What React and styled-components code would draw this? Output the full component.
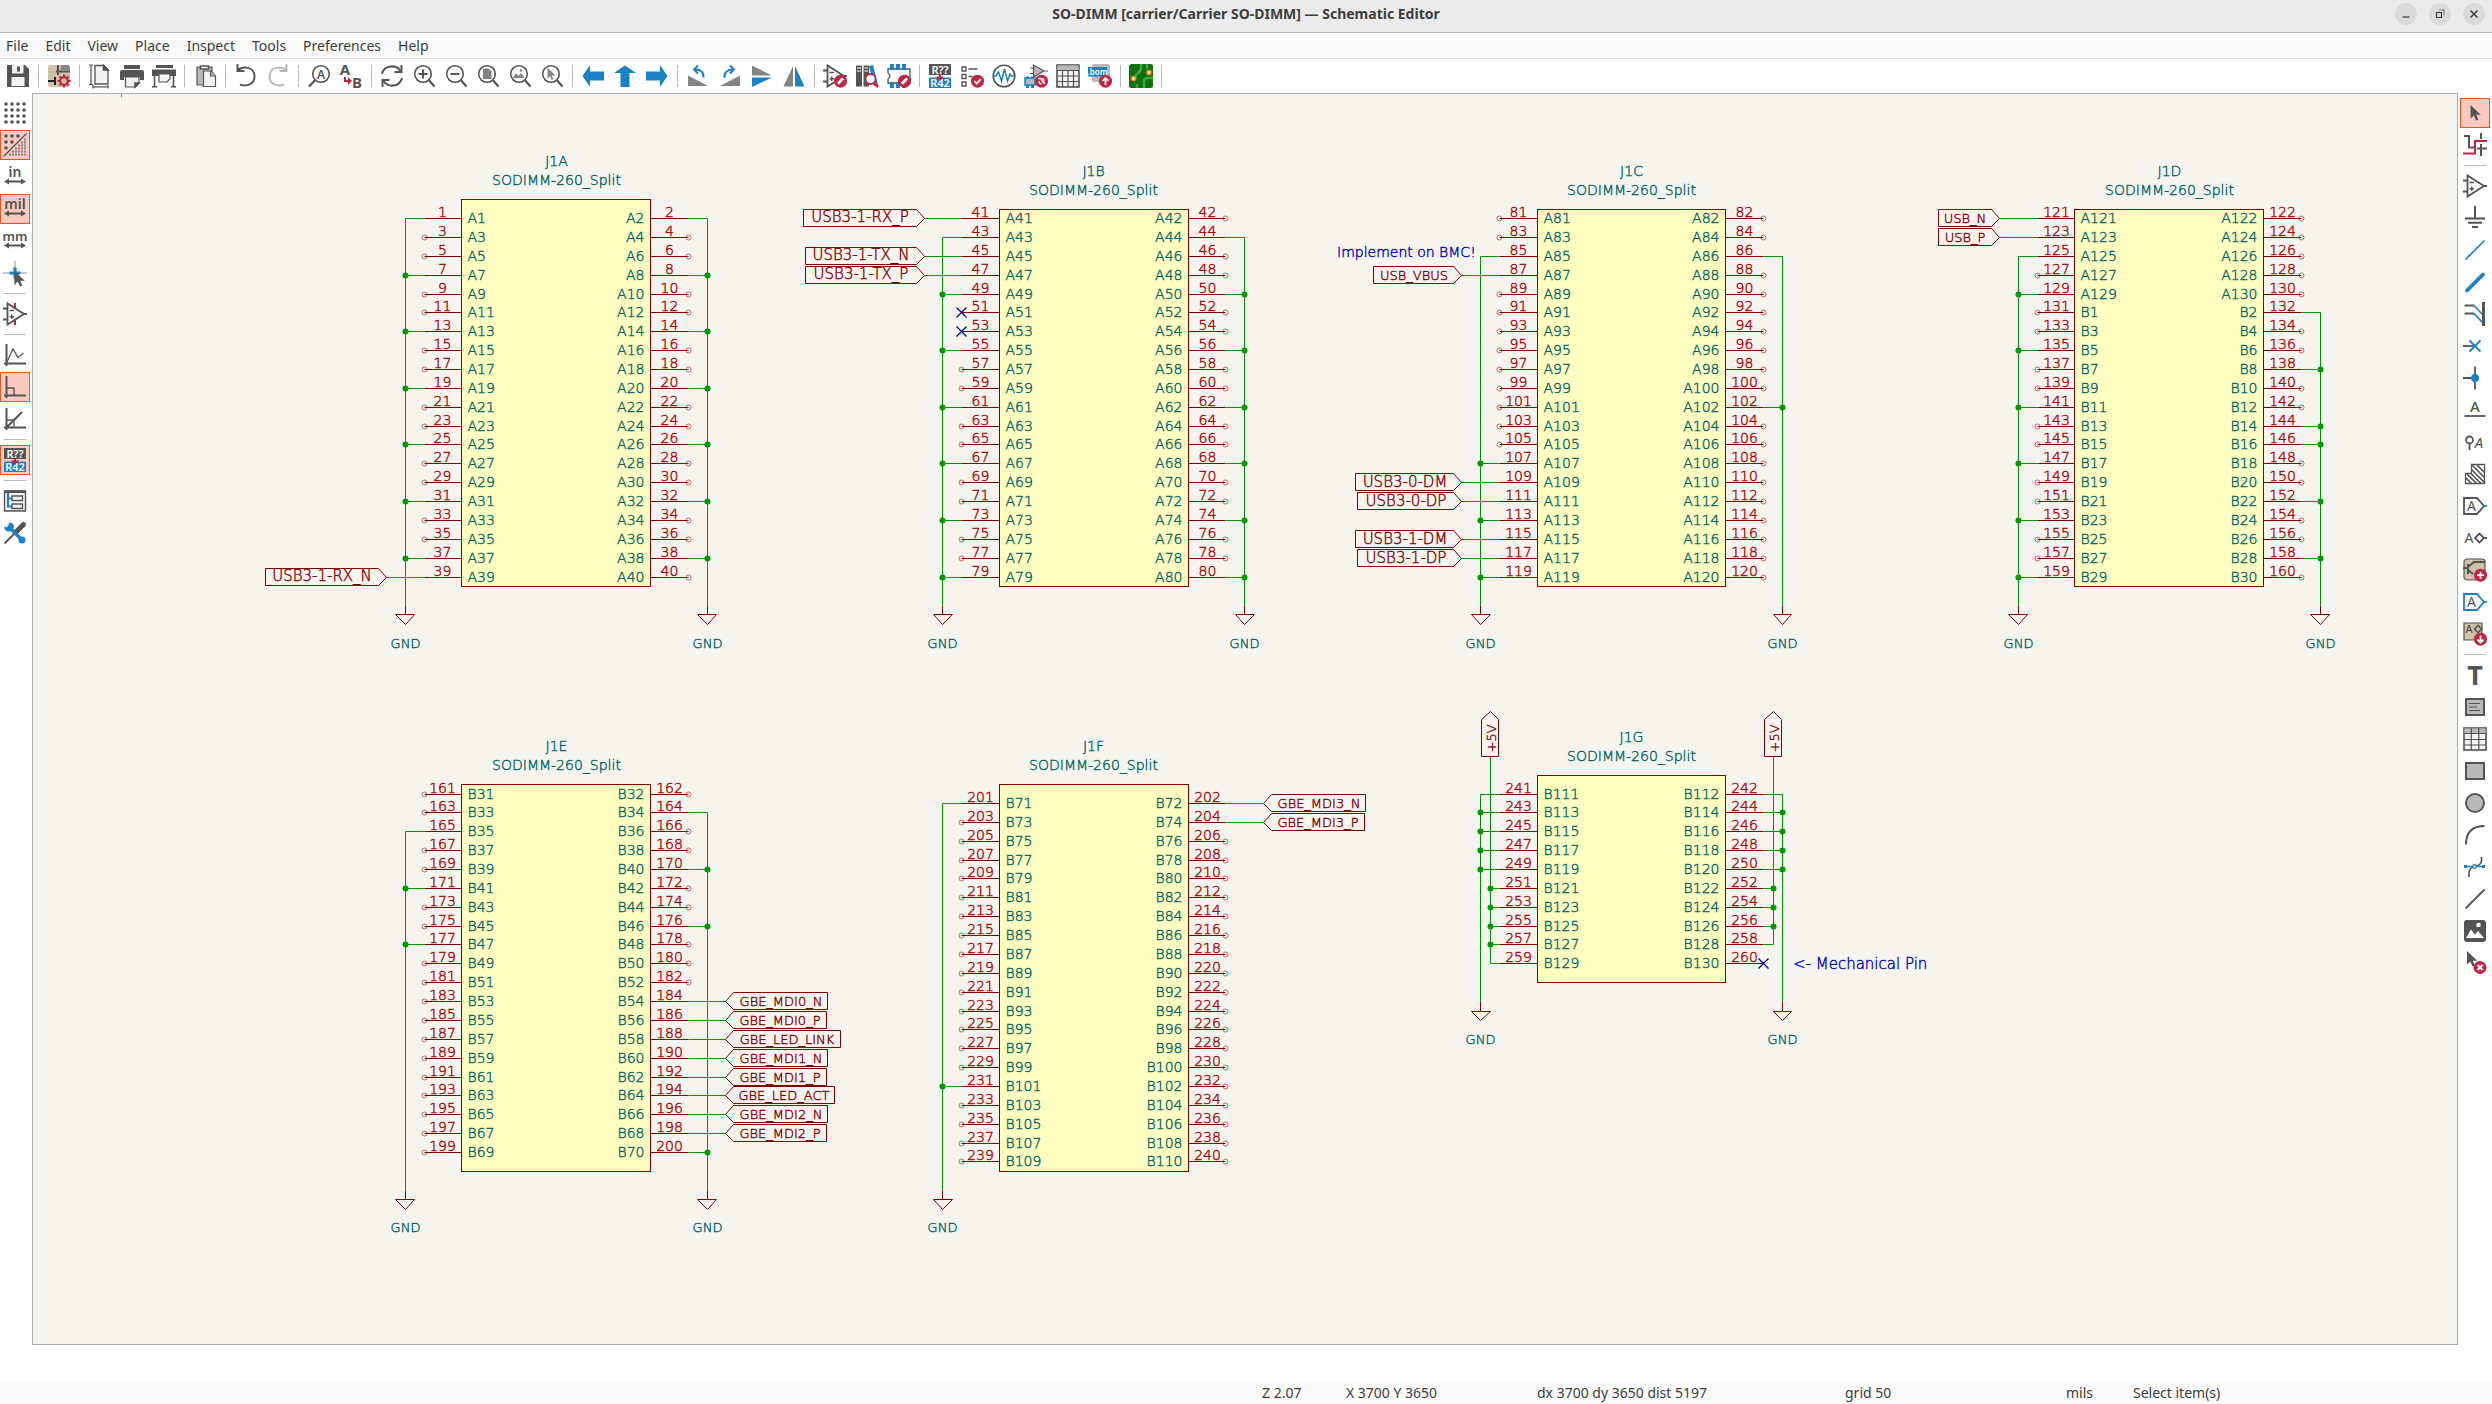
import React from "react";
import styled, { createGlobalStyle } from "styled-components";

/* ---------- palette ---------- */
const c = {
  ink: "#545454",
  blue: "#1a81c4",
  red: "#bf2641",
  grey: "#b9b9b9",
  mid: "#848484",
  light: "#f3f3f3",
  beige: "#cfc1a6",
  border: "#acacac",
};
const UI_FONT = '"Noto Sans", "Open Sans", sans-serif';

const GlobalStyle = createGlobalStyle`
  * { box-sizing: border-box; }
  html, body { margin: 0; background: #fff; }
  body { font: 14px/20px ${UI_FONT}; color: #3d3d3d; }
  button { font: inherit; color: inherit; border: 0; background: none; padding: 0; }
`;

/* ---------- window frame ---------- */
const Window = styled.div`
  display: flex;
  flex-direction: column;
  height: 100vh;
  overflow: hidden;
`;
const TitleBar = styled.header`
  display: grid;
  grid-template-columns: 1fr auto 1fr;
  align-items: center;
  height: 33px;
  padding: 0 7px 4px;
  background: #ebebeb;
  border-bottom: 1px solid #b8b8b8;
`;
const Title = styled.h1`
  grid-column: 2;
  margin: 0;
  font-size: 14px;
  line-height: 20px;
  font-weight: 700;
`;
const WindowButtons = styled.div`
  display: flex;
  justify-content: flex-end;
  gap: 12px;
`;
const RoundButton = styled.button`
  display: flex;
  align-items: center;
  justify-content: center;
  width: 22px;
  height: 22px;
  border-radius: 50%;
  background: #dadada;
`;
const MenuBar = styled.nav`
  display: flex;
  gap: 17px;
  height: 26px;
  padding: 0 6px;
  background: #fafafa;
  border-bottom: 1px solid #dedede;
`;
const MenuItem = styled.button`
  line-height: 24px;
`;
const TopTools = styled.div`
  display: flex;
  align-items: center;
  height: 34px;
  padding-left: 2px;
  background: #fff;
`;
const Workspace = styled.div`
  display: flex;
  flex: 1;
  min-height: 0;
`;
const SideTools = styled.div`
  display: flex;
  flex-direction: column;
  align-items: center;
  width: ${(p) => (p.$right ? 34 : 32)}px;
  padding: 4px ${(p) => (p.$right ? 0 : 2)}px 0 0;
`;
const Canvas = styled.main`
  flex: 1;
  min-width: 0;
  background: #f5f4ef;
  border: 1px solid ${c.border};
`;
const ToolButton = styled.button`
  display: flex;
  flex: none;
  align-items: center;
  justify-content: center;
  width: 30px;
  height: 30px;
  margin: 1px;
  border: 1px solid ${(p) => (p.$on ? "#e95420" : "transparent")};
  background: ${(p) => (p.$on ? "#f9cabd" : "none")};
`;
const Rule = styled.span`
  flex: none;
  background: ${c.grey};
  ${(p) =>
    p.$flat
      ? "width: 22px; height: 1px; margin: 4px 0;"
      : "width: 1px; height: 22px; margin: 0 4px;"}
`;
const Messages = styled.div`
  height: 36px;
  background: #fff;
`;
const StatusBar = styled.footer`
  display: grid;
  grid-template-columns: 1fr 84px 191px 308px 221px 67px 359px;
  height: 23px;
  line-height: 23px;
  background: #fafafa;
`;
const StatusField = styled.span`
  white-space: pre;
`;

/* ---------- icons ---------- */
const Glyph = styled.svg`
  display: block;
  width: 24px;
  height: 24px;
  overflow: visible;
  fill: none;
  stroke: ${c.ink};
  stroke-width: 1.6;
`;
const Letter = styled.text`
  font-family: ${UI_FONT};
  font-weight: ${(p) => p.$weight || 600};
  text-anchor: middle;
  stroke: none;
`;

const Badge = ({ children, x = 17.5, y = 17.2 }) => (
  <g transform={`translate(${x} ${y})`}>
    <circle r="6.5" fill={c.red} stroke="none" />
    <g stroke="#fff" strokeWidth="1.8">{children}</g>
  </g>
);
const Pencil = () => <path d="M-2.6 2.6 2.6-2.8" strokeWidth="2.8" />;
const Lens = ({ children }) => (
  <>
    <circle cx="11" cy="10" r="8.3" />
    <path d="M16.8 16 22.5 22.5" strokeWidth="2.2" />
    {children}
  </>
);
const OpAmp = ({ children }) => (
  <>
    {children}
    <path d="M4.5 1.5v21L21 12zM0 6.5h4.5M0 17.5h4.5M20 12h4" strokeWidth="1.8" />
    <path d="M6.5 8.5h4.5M6.5 14.8h4.5M8.75 12.5v4.5" strokeWidth="1.5" />
  </>
);
const Annotate = () => (
  <>
    <rect x="1" y="0" width="22" height="11" fill={c.ink} stroke="none" />
    <rect x="1" y="13.5" width="22" height="10.5" fill={c.blue} stroke="none" />
    <Letter x="12" y="9.5" fontSize="11" fill="#fff">R??</Letter>
    <Letter x="12" y="22.7" fontSize="11" fill="#fff">R42</Letter>
    <path d="M12 10v3" stroke={c.red} strokeWidth="2" />
    <path d="M8 12.5h8l-4 4.5z" fill={c.red} stroke="none" />
  </>
);
const Unit = ({ label }) => (
  <>
    <Letter x="12" y="12" fontSize={label === "mm" ? 13 : 14} fill={c.ink}>{label}</Letter>
    <path d="M4 16.5h16" strokeWidth="2" />
    <path d="M1 16.5l5-3v6zM23 16.5l-5-3v6z" fill={c.ink} stroke="none" />
  </>
);
const Arrow = ({ turn }) => (
  <path d="M1.5 12 9 1v6.5h14v9H9V23z" fill={c.blue} stroke="none" transform={`rotate(${turn} 12 12)`} />
);
const Cells = ({ dark }) => (
  <>
    <rect x="1" y="1" width="22" height="22" fill={c.light} />
    <rect x="1.5" y="1.5" width="21" height="5" fill={c.grey} stroke="none" />
    {dark ? (
      <path d="M1 6.5h22M1 12h22M1 17.5h22M6.5 6v17M12 6v17M17.5 6v17" strokeWidth="1.2" />
    ) : (
      <path d="M1 6.5h22M1 12.5h22M1 18h22M8.3 1v22M15.8 1v22" strokeWidth="1.2" />
    )}
  </>
);
const Cursor = ({ x = 0, y = 0 }) => (
  <path d="M0 0v13.5l3.3-3 2.2 5 2.4-1-2.2-4.8h4.6z" fill={c.ink} stroke="none" transform={`translate(${x} ${y})`} />
);
const Tag = ({ color }) => (
  <>
    <path d="M1 4h13l7 8-7 8H1z" stroke={color} strokeWidth="1.8" fill="#fff" />
    <path d="M21 12h3" stroke={c.blue} strokeWidth="1.8" />
    <Letter x="8.5" y="17" fontSize="14" $weight={400} fill={c.ink}>A</Letter>
  </>
);
const Footprint = ({ y = 0 }) => (
  <path d={`M3 ${y}h4v6H3zM9 ${y}h4v6H9zM15 ${y}h4v6h-4z`} fill={c.blue} stroke="none" />
);

const ICONS = {
  save: (
    <>
      <path d="M1 1h18l4 4v18H1z" fill={c.ink} stroke="none" />
      <path d="M6 1h11.5v8.5H6zM5.5 13h13v9h-13z" fill={c.light} stroke="none" />
      <path d="M11 2.5h3v5h-3z" fill={c.ink} stroke="none" />
    </>
  ),
  setup: (
    <>
      <rect x="1" y="1" width="22" height="22" rx="3" fill={c.beige} stroke="none" />
      <path d="M14 1h6q3 0 3 3v2h-9z" fill={c.mid} stroke="none" />
      <path d="M11 1v10M9 7.500h14" stroke={c.ink} strokeWidth="2" />
      <path d="M1 17h7M8 13v8" stroke="#222" strokeWidth="2" />
      <circle cx="17" cy="17" r="3.8" stroke={c.red} strokeWidth="2.2" fill={c.beige} />
      <path d="M17 10.5v3M17 20.5v3M10.5 17h3M20.5 17h3M12.5 12.5l2 2M19.5 19.5l2 2M21.5 12.5l-2 2M14.5 19.5l-2 2" stroke={c.red} strokeWidth="2" />
    </>
  ),
  page: (
    <>
      <path d="M7 1.5h9l4 4V20H7z" fill={c.light} strokeWidth="1.3" />
      <path d="M15.5 1.5v4.5H20z" fill={c.ink} />
      <path d="M1 1h4M3 1v19M1 20.3h4M5 22.8h15M5 21v3.5M20 21v3.5" strokeWidth="1.2" />
    </>
  ),
  print: (
    <>
      <path d="M4 1h16v4H4zM2 6h20q2 0 2 2v8h-4v-3H4v3H0V8q0-2 2-2z" fill={c.ink} stroke="none" />
      <path d="M5.5 13h13.5v6l-3.5 4h-10z" fill={c.light} strokeWidth="1.2" />
      <path d="M15 23v-4h4z" fill={c.ink} />
    </>
  ),
  plot: (
    <>
      <path d="M4 1h17v3H4zM0 5.5h24v6.5H0z" fill={c.ink} stroke="none" />
      <path d="M7 10h11v5l-3 3H7z" fill={c.light} strokeWidth="1.2" />
      <path d="M2.5 12v10.5M21.5 12v10.5M0 22.8h5M19 22.8h5" />
    </>
  ),
  paste: (
    <>
      <path d="M4 3h15v18H4z" fill={c.grey} strokeWidth="1.2" />
      <path d="M7.500 2h8v3h-8z" fill={c.light} strokeWidth="1.5" />
      <path d="M10.500 7h7.500l4.500 5v10.5h-12z" fill={c.light} strokeWidth="1.2" />
      <path d="M17.500 7v5h5" fill={c.grey} strokeWidth="1.2" />
    </>
  ),
  undo: <path d="M3.5 6.5c5-5 17-4 17 6 0 8-8 10.5-14.5 8M3.5 0v7h7" strokeWidth="2" />,
  redo: <path d="M20.5 6.5c-5-5-17-4-17 6 0 8 8 10.5 14.5 8M20.5 0v7h-7" strokeWidth="2" stroke={c.grey} />,
  find: (
    <>
      <circle cx="14" cy="10" r="8.3" />
      <path d="M8.2 16 2 22.5" strokeWidth="2.2" />
      <Letter x="14" y="14.5" fontSize="12" fill={c.ink}>A</Letter>
    </>
  ),
  replace: (
    <>
      <Letter x="6" y="11" fontSize="15" $weight={700} fill={c.ink}>A</Letter>
      <Letter x="18" y="23.5" fontSize="15" $weight={700} fill={c.ink}>B</Letter>
      <path d="M6 13v4h4" stroke={c.red} strokeWidth="2" />
      <path d="M9 13l4 4-4 4z" fill={c.red} stroke="none" />
    </>
  ),
  refresh: (
    <>
      <path d="M2 10C4 1 16 0 20.5 7M22 14c-2 9-14 10-18.5 3" strokeWidth="2" />
      <path d="M21.5 1v7h-7M2.5 23v-7h7" strokeWidth="2" />
    </>
  ),
  zoomIn: <Lens><path d="M6.5 10h9M11 5.5v9" strokeWidth="2" /></Lens>,
  zoomOut: <Lens><path d="M6.5 10h9" strokeWidth="2" /></Lens>,
  zoomFit: <Lens><path d="M7 4.5h5.5l3 3V15H7z" fill={c.mid} stroke="none" /></Lens>,
  zoomObjects: <Lens><path d="M5 14l3-5 2.5 3L13 9l4 5z" fill={c.mid} stroke="none" /><circle cx="13" cy="6.5" r="1.3" fill={c.mid} stroke="none" /></Lens>,
  zoomSelection: <Lens><path d="M7.5 3.5v11l2.5-2.3 1.7 3.8 1.8-.8-1.7-3.7h3.7z" fill={c.mid} stroke="none" /></Lens>,
  left: <Arrow turn={0} />,
  up: <Arrow turn={90} />,
  right: <Arrow turn={180} />,
  rotateCcw: (
    <>
      <path d="M2 11.5v10.5h20z" fill={c.mid} stroke="none" />
      <path d="M17.5 13.5c.5-5-3-8-8-8M12 1.5l-4 4 4 4" stroke={c.blue} strokeWidth="2" />
    </>
  ),
  rotateCw: (
    <>
      <path d="M22 11.5v10.5H2z" fill={c.mid} stroke="none" />
      <path d="M6.5 13.5c-.5-5 3-8 8-8M12 1.5l4 4-4 4" stroke={c.blue} strokeWidth="2" />
    </>
  ),
  mirrorV: (
    <>
      <path d="M2 1.5v10h20z" fill={c.mid} stroke="none" />
      <path d="M2 23v-9.5h20z" fill={c.blue} stroke="none" />
    </>
  ),
  mirrorH: (
    <>
      <path d="M1.5 22.5h9.5V2z" fill={c.mid} stroke="none" />
      <path d="M22.5 22.5H13V2z" fill={c.blue} stroke="none" />
    </>
  ),
  symbolEditor: <><OpAmp /><Badge><Pencil /></Badge></>,
  library: (
    <>
      <path d="M1 1.5h6v21H1zM8.5 1.5h5.5v21H8.5z" fill={c.ink} stroke="none" />
      <path d="M2 4h4M2 7h4M9.5 4h3.5M9.5 7h3.5" stroke="#fff" strokeWidth="1" />
      <path d="M14 2l4-1 5 20-4 1z" fill={c.blue} stroke="none" />
      <circle cx="15.5" cy="15" r="5" fill="#fff" stroke={c.red} strokeWidth="1.8" />
      <path d="M19 19l4 4" stroke={c.red} strokeWidth="2.5" />
    </>
  ),
  footprint: (
    <>
      <path d="M1 5h22v14H1v-4q4-3 0-6z" strokeWidth="1.3" />
      <Footprint y={0} /><Footprint y={18} />
      <Badge><Pencil /></Badge>
    </>
  ),
  annotate: <Annotate />,
  erc: (
    <>
      <path d="M2 3h4v4H2zM2 10.5h4v4H2zM2 18h4v4H2zM8.5 5h9M8.5 12.5h4" strokeWidth="1.4" />
      <Badge><path d="M-3 0l2.2 2.5L3.2-2" /></Badge>
    </>
  ),
  sim: (
    <>
      <circle cx="12" cy="12" r="10.8" />
      <path d="M1.5 12h2.5l2.5-4 3 9 3-12 3 12 2.5-7 1.5 2h3" stroke={c.blue} strokeWidth="1.5" />
    </>
  ),
  assign: (
    <>
      <path d="M9.5 1v12L20 7zM6 4h3.5M6 9.5h3.5M20 7h4" strokeWidth="1.2" fill={c.grey} />
      <path d="M1 14h10v7H1z" fill={c.grey} stroke={c.blue} />
      <path d="M2 12.5h3v2H2zM7 12.5h3v2H7zM2 21h3v3H2zM7 21h3v3H7z" fill={c.blue} stroke="none" />
      <Badge><path d="M-3.3-2.3q3-1.5 3.3.8t3.3 3.8M-2.5 0q0 3 2.5 2.5M2.5 0q0-3-2.5-2.5" strokeWidth="1.4" /></Badge>
    </>
  ),
  table: <Cells dark />,
  bom: (
    <>
      <rect x="4" y="0" width="18" height="18" rx="2" fill={c.grey} stroke="none" />
      <path d="M0 3h19v9.5H0z" fill={c.blue} stroke="none" />
      <Letter x="9.5" y="10.7" fontSize="8" fill="#fff">.bom</Letter>
      <Badge><path d="M0 3.8v-6M-3-.3l3-3 3 3" /></Badge>
    </>
  ),
  pcb: (
    <>
      <rect x="0" y="0" width="24" height="24" rx="2.5" fill="#10720f" stroke="none" />
      <path d="M12 0v4q0 3-3 5t-3 6M24 14h-5q-4 0-4 4v6M8 24v-4M18 0v5" stroke="#43a047" strokeWidth="2.6" />
      <circle cx="20" cy="8.5" r="2" fill="#fff" stroke="#f39019" />
      <circle cx="4.5" cy="14.5" r="2" fill="#fff" stroke="#f39019" />
    </>
  ),
  gridDots: (
    <g fill={c.ink} stroke="none">
      {[3, 9, 15, 21].map((y) => [3, 9, 15, 21].map((x) => <circle key={x + "-" + y} cx={x} cy={y} r="1.8" />))}
    </g>
  ),
  gridOverride: (
    <>
      <g fill={c.ink} stroke="none">
        {[[3, 3], [9, 3], [15, 3], [3, 9], [9, 9], [3, 15]].map(([x, y]) => <circle key={x + "-" + y} cx={x} cy={y} r="1.8" />)}
      </g>
      <path d="M22 5.5v17M19 8.5v14M16 11.5v11M13 14.5v8M10 17.5v5M7 20.5v2" stroke={c.mid} strokeDasharray="2 1" strokeWidth="2" />
      <path d="M.5 23.5 23.5.5" strokeWidth="1.2" />
    </>
  ),
  inches: <Unit label="in" />,
  mils: <Unit label="mil" />,
  mm: <Unit label="mm" />,
  crosshair: (
    <>
      <path d="M12 0v24M0 12h24" stroke={c.grey} />
      <path d="M12 6.5v11M6.5 12h11" stroke={c.blue} strokeWidth="3.2" />
      <Cursor x={11.5} y={10} />
    </>
  ),
  hiddenPins: <OpAmp><path d="M12 1v5.5M12 17.5V23" stroke={c.red} strokeWidth="2" /></OpAmp>,
  freeAngle: <><path d="M3.5 1v22M1 20.5h22" strokeWidth="2" /><path d="M3.5 20 10 6l5 8.5L20.5 10" strokeWidth="1.3" /></>,
  rightAngle: <><path d="M3.5 1v22M1 20.5h22" strokeWidth="2" /><path d="M3.5 13h7.5v7.5" strokeWidth="1.5" /></>,
  halfAngle: <><path d="M3.5 1v22M1 20.5h22M3.5 20.5 19 5" strokeWidth="2" /><path d="M3.5 13h7.5v7.5" strokeWidth="1.3" /></>,
  tree: (
    <>
      <path d="M1.5 2h21v20h-21z" fill={c.light} strokeWidth="1.4" />
      <path d="M1 1.5h22V4H1z" fill={c.ink} stroke="none" />
      <path d="M5 4v13.5h4M5 9.5h4" stroke={c.blue} strokeWidth="2" />
      <path d="M9 7h10.5v4.5H9zM9 15h10.5v4.5H9z" strokeWidth="1.3" />
    </>
  ),
  tools: (
    <>
      <path d="M1.5 22.5 13 11" strokeWidth="1.8" />
      <path d="M13.5 10.5 20.5 3.5" strokeWidth="5" strokeLinecap="round" />
      <path d="M6 6 20 20" stroke={c.blue} strokeWidth="3.6" strokeLinecap="round" />
      <path d="M5.5 1.5 6.5 5 5 6.5 1.5 5.5Q.8 9 4 10.3T10 7.5 7 1.6z" fill={c.blue} stroke="none" />
      <circle cx="19" cy="19" r="3.5" fill={c.blue} stroke="none" />
    </>
  ),
  select: <Cursor x={7.5} y={4} />,
  highlight: (
    <>
      <path d="M1 3h5v11.5h5M18 0v6M18 11v12M14 15.5h10" strokeWidth="2" />
      <path d="M0 20.5h12V8h12" stroke={c.red} strokeWidth="2" />
    </>
  ),
  symbol: <OpAmp />,
  power: <path d="M12 0v12M2 12.5h20M5 16.8h14M9 21h6" strokeWidth="2" />,
  wire: <path d="M2.5 21.5l19-19" stroke={c.blue} strokeWidth="1.7" />,
  bus: <path d="M4 20.5 20 4.5" stroke={c.blue} strokeWidth="3.8" strokeLinecap="round" />,
  busEntry: (
    <>
      <path d="M1.5 3.5h9.5M1.5 11.5h9.5" strokeWidth="1.8" />
      <path d="M11 3.5l8.5 9M11 11.5l8.5 9" stroke={c.blue} strokeWidth="1.7" />
      <path d="M20.5 0v24" strokeWidth="3" />
    </>
  ),
  noConnect: <><path d="M0 12h12" strokeWidth="1.8" /><path d="M6.5 6.5l11 11M17.5 6.5l-11 11" stroke={c.blue} strokeWidth="1.8" /></>,
  junction: <><path d="M0 12h12M12 0.5v23" strokeWidth="1.8" /><circle cx="12" cy="12" r="4" fill={c.blue} stroke="none" /></>,
  netLabel: <><Letter x="12" y="14" fontSize="15" $weight={500} fill={c.ink}>A</Letter><path d="M1.5 18h21" strokeWidth="1.8" /></>,
  netClass: (
    <>
      <circle cx="6.5" cy="10" r="3.5" strokeWidth="1.8" />
      <path d="M6.5 13.5V20" strokeWidth="1.8" />
      <Letter x="16" y="17.5" fontSize="15" fontStyle="italic" $weight={400} fill={c.ink}>A</Letter>
    </>
  ),
  ruleArea: (
    <>
      <path d="M2.5 21.5v-10h6v-9h13v19z" strokeWidth="1.3" fill="#fff" />
      <path d="M9 3l12.5 12.5M14 3l7.5 7.5M8.5 7.5 21.5 20.5M8.5 12l9.5 9.5M4 12l9.5 9.5M2.5 15.5l6 6" strokeWidth="1.7" />
    </>
  ),
  globalLabel: <Tag color={c.ink} />,
  hierLabel: <><Letter x="6" y="17" fontSize="14" $weight={400} fill={c.ink}>A</Letter><path d="M12 12l4.5-4.5L21 12l-4.5 4.5zM21 12h3" strokeWidth="1.8" /></>,
  sheet: (
    <>
      <rect x="1" y="1" width="21" height="21" rx="3" fill={c.beige} strokeWidth="1.2" />
      <path d="M0 10h5M5 6v10M5 9l6-5h11M5 12l5 4" strokeWidth="2" />
      <Badge><path d="M-3.5 0h7M0-3.5v7" /></Badge>
    </>
  ),
  sheetPin: <Tag color={c.blue} />,
  importPin: (
    <>
      <path d="M1 1h18v17H1z" fill={c.beige} strokeWidth="1.2" />
      <Letter x="6" y="11" fontSize="11" $weight={500} fill={c.ink}>A</Letter>
      <path d="M11.5 7 15 3.5 18.5 7 15 10.5z" />
      <Badge><path d="M0-3.5v6M-3 .5l3 3 3-3" /></Badge>
    </>
  ),
  text: <Letter x="12" y="22" fontSize="27" $weight={700} fill={c.ink}>T</Letter>,
  textBox: <><rect x="3" y="4" width="18" height="16" fill={c.grey} strokeWidth="2" /><path d="M6 8.5h11M6 12h8M6 15.5h11" strokeWidth="1.2" /></>,
  sheetTable: <Cells />,
  rectangle: <rect x="3" y="4" width="18" height="16" fill={c.grey} strokeWidth="2" />,
  circle: <circle cx="12" cy="12" r="9" fill={c.grey} strokeWidth="2" />,
  arc: <path d="M3 21.5C3 10 9 3 21.5 3" strokeWidth="2" />,
  bezier: (
    <>
      <path d="M6 22V18q0-5 6-6.5T18.5 6V2" strokeWidth="1.7" />
      <path d="M3 11.5h18" stroke={c.blue} strokeWidth="1.5" />
      <path d="M1 10h3v3H1zM19 10h3v3h-3z" fill={c.blue} stroke="none" />
      <circle cx="11.5" cy="11.5" r="1.8" stroke={c.blue} fill="#fff" strokeWidth="1.2" />
    </>
  ),
  line: <path d="M2.5 21.5l19-19" strokeWidth="1.8" />,
  image: (
    <>
      <rect x="1" y="1" width="22" height="22" rx="3" fill={c.ink} stroke="none" />
      <path d="M3 19l5-8.5 4 5 3-3.5 6 7z" fill="#fff" stroke="none" />
      <circle cx="15.5" cy="6" r="2.3" fill="#fff" stroke="none" />
    </>
  ),
  remove: <><Cursor x={4} y={0} /><Badge y={16.5} x={17}><path d="M-2.5-2.5l5 5M2.5-2.5l-5 5" /></Badge></>,
};

const TOP = [
  "save", "|", "setup", "|", "page", "print", "plot", "|", "paste", "|", "undo", "redo", "|",
  "find", "replace", "|", "refresh", "zoomIn", "zoomOut", "zoomFit", "zoomObjects", "zoomSelection", "|",
  "left", "up", "right", "|", "rotateCcw", "rotateCw", "mirrorV", "mirrorH", "|",
  "symbolEditor", "library", "footprint", "|", "annotate", "erc", "sim", "assign", "table", "bom", "|", "pcb", "|",
];
const LEFT = [
  "gridDots", "gridOverride", "inches", "mils", "mm", "crosshair", "|", "hiddenPins", "|",
  "freeAngle", "rightAngle", "halfAngle", "|", "annotate", "|", "tree", "tools",
];
const RIGHT = [
  "select", "highlight", "|", "symbol", "power", "wire", "bus", "busEntry", "noConnect", "junction",
  "netLabel", "netClass", "ruleArea", "globalLabel", "hierLabel", "sheet", "sheetPin", "importPin", "|",
  "text", "textBox", "sheetTable", "rectangle", "circle", "arc", "bezier", "line", "image", "remove",
];

const Tools = ({ items, active = [], flat }) =>
  items.map((id, i) =>
    id === "|" ? (
      <Rule key={i} $flat={flat} />
    ) : (
      <ToolButton key={i} type="button" aria-label={id} aria-pressed={active.includes(id)} $on={active.includes(id)}>
        <Glyph viewBox="0 0 24 24" aria-hidden="true">{ICONS[id]}</Glyph>
      </ToolButton>
    )
  );

/* ---------- schematic ---------- */
const Sheet = styled.svg`
  display: block;
  width: 100%;
  height: 100%;
  font-family: "DejaVu Sans", sans-serif;
  font-weight: 200;
  fill: none;
`;
const Wire = styled.path`
  stroke: #009600;
`;
const Joint = styled.circle`
  fill: #009600;
`;
const Body = styled.rect`
  fill: #ffffc2;
  stroke: #840000;
`;
const PinLine = styled.path`
  stroke: #840000;
`;
const OpenEnd = styled.circle`
  stroke: #840000;
  stroke-opacity: 0.55;
`;
const Cross = styled.path`
  stroke: #000084;
  stroke-width: 1.2;
`;
const INK = { name: "#006464", number: "#a90000", label: "#840000", note: "#0000c2" };
const SheetText = styled.text`
  fill: ${(p) => INK[p.$kind || "name"]};
  stroke: ${(p) => INK[p.$kind || "name"]};
  stroke-width: 0.4;
  text-anchor: ${(p) => p.$anchor || "middle"};
  font-size: ${(p) => p.$size || 14}px;
`;

// One grid step is 50 mil on the sheet; lines sit on whole device pixels.
const STEP = 9.434;
const px = (g) => Math.floor(372.15 + g * STEP) + 0.5;
const py = (g) => Math.floor(124.55 + g * STEP) + 0.5;
const COLUMN = 57;

const range = (from, to, by = 2) => Array.from({ length: (to - from) / by + 1 }, (_, i) => from + i * by);

const gnd = (x, pins, end) => ({ x, pins, end });

const UNITS = [
  {
    ref: "J1A", col: 0, top: -2, bottom: 39, row: 0, start: 1,
    rails: [gnd(0, range(1, 37, 6), 41), gnd(32, range(2, 38, 6), 41)],
    labels: { 39: ["USB3-1-RX_N", 121] },
  },
  {
    ref: "J1B", col: 1, top: -1, bottom: 39, row: 0, start: 41,
    rails: [gnd(0, range(43, 79, 6), 41), gnd(32, range(44, 80, 6), 41)],
    labels: { 41: ["USB3-1-RX_P", 121], 45: ["USB3-1-TX_N", 119], 47: ["USB3-1-TX_P", 119] },
    nc: [51, 53],
  },
  {
    ref: "J1C", col: 2, top: -1, bottom: 39, row: 0, start: 81,
    rails: [gnd(0, [85, 107, 113, 119], 41), gnd(32, [86, 102], 41)],
    labels: {
      87: ["USB_VBUS", 88], 109: ["USB3-0-DM", 106], 111: ["USB3-0-DP", 104],
      115: ["USB3-1-DM", 106], 117: ["USB3-1-DP", 104],
    },
  },
  {
    ref: "J1D", col: 3, top: -1, bottom: 39, row: 0, start: 121,
    rails: [gnd(0, [125, 129, 135, 141, 147, 153, 159], 41), gnd(32, [132, 138, 144, 146, 152, 158], 41)],
    labels: { 121: ["USB_N", 61], 123: ["USB_P", 61] },
  },
  {
    ref: "J1E", col: 0, top: 60, bottom: 101, row: 61, start: 161,
    rails: [gnd(0, [165, 171, 177], 103), gnd(32, [164, 170, 176, 200], 103)],
    labels: {
      184: ["GBE_MDI0_N", 102], 186: ["GBE_MDI0_P", 101], 188: ["GBE_LED_LINK", 115], 190: ["GBE_MDI1_N", 102],
      192: ["GBE_MDI1_P", 101], 194: ["GBE_LED_ACT", 109], 196: ["GBE_MDI2_N", 102], 198: ["GBE_MDI2_P", 101],
    },
  },
  {
    ref: "J1F", col: 1, top: 60, bottom: 101, row: 62, start: 201,
    rails: [gnd(0, [201, 231], 103)],
    labels: { 202: ["GBE_MDI3_N", 102], 204: ["GBE_MDI3_P", 101] },
  },
  {
    ref: "J1G", col: 2, top: 59, bottom: 81, row: 61, start: 241, pairs: 10,
    rails: [
      gnd(0, range(241, 249), 83), gnd(32, range(242, 250), 83),
      { x: 1, pins: range(259, 251, -2), supply: 57 }, { x: 31, pins: range(258, 252, -2), supply: 57 },
    ],
    labels: {},
    nc: [260],
  },
];

const NetLabel = ({ x, y, dir, text, width }) => {
  const X = px(x);
  const Y = py(y);
  const shoulder = X + dir * 8;
  const end = X + dir * width;
  const half = 9;
  const wide = text.includes("-");
  // Wide labels with an underscore need room above the frame's lower edge.
  const baseline = Y + (wide && text.includes("_") ? 3.5 : 4.5);
  return (
    <g>
      <PinLine d={`M${X} ${Y}L${shoulder} ${Y - half}H${end}V${Y + half - 1}H${shoulder}Z`} />
      <SheetText $kind="label" $size={wide ? 15 : 13} x={Math.round((shoulder + end) / 2)} y={baseline}>
        {text}
      </SheetText>
    </g>
  );
};

const Ground = ({ x, y }) => (
  <g>
    <PinLine d={`M${px(x)} ${py(y)}V${py(y + 1)}M${px(x - 1)} ${py(y + 1)}H${px(x + 1)}L${px(x)} ${py(y + 2)}Z`} />
    <SheetText $size={13} x={px(x)} y={py(y + 4) + 4.5}>GND</SheetText>
  </g>
);

const Supply = ({ x, y }) => {
  const X = px(x);
  const Y = py(y);
  return (
    <g>
      <PinLine d={`M${X - 9} ${Y}V${Y - 37}L${X} ${Y - 45}L${X + 8} ${Y - 37}V${Y}Z`} />
      <SheetText $kind="label" $size={13} $anchor="start" transform={`translate(${X + 5} ${Y - 4}) rotate(-90)`}>+5V</SheetText>
    </g>
  );
};

const Connector = ({ unit }) => {
  const { ref: name, col, top, bottom, row, start, pairs = 20, rails, labels, nc = [] } = unit;
  const base = col * COLUMN;
  const rowOf = (n) => row + 2 * Math.floor((n - start) / 2);
  const isLeft = (n) => n % 2 === 1;
  const nameOf = (n) => (n > 130 ? `B${n - 130}` : `A${n}`);
  const tied = new Set(rails.flatMap((r) => r.pins));
  return (
    <g>
      <Body x={px(base + 6)} y={py(top)} width={px(base + 26) - px(base + 6)} height={py(bottom) - py(top)} />
      <SheetText x={px(base + 16)} y={py(top - 4) + 4.5}>{name}</SheetText>
      <SheetText x={px(base + 16)} y={py(top - 2) + 4.5}>SODIMM-260_Split</SheetText>
      {range(start, start + pairs * 2 - 1, 1).map((n) => {
        const left = isLeft(n);
        const y = rowOf(n);
        const end = base + (left ? 2 : 30);
        const edge = base + (left ? 6 : 26);
        return (
          <g key={n}>
            <PinLine d={`M${px(edge)} ${py(y)}H${px(end)}`} />
            <SheetText $kind="number" x={px(base + (left ? 4 : 28))} y={py(y) - 1.5}>{n}</SheetText>
            <SheetText $anchor={left ? "start" : "end"} x={px(edge) + (left ? 6 : -6)} y={py(y) + 4.5}>{nameOf(n)}</SheetText>
            {labels[n] && (
              <>
                <Wire d={`M${px(end)} ${py(y)}H${px(base + (left ? -2 : 34))}`} />
                <NetLabel x={base + (left ? -2 : 34)} y={y} dir={left ? -1 : 1} text={labels[n][0]} width={labels[n][1]} />
              </>
            )}
            {nc.includes(n) && (
              <Cross d={`M${px(end) - 5} ${py(y) - 5}l10 10M${px(end) + 5} ${py(y) - 5}l-10 10`} />
            )}
            {!labels[n] && !nc.includes(n) && !tied.has(n) && <OpenEnd cx={px(end)} cy={py(y)} r="2.5" />}
          </g>
        );
      })}
      {rails.map((rail) => {
        const x = base + rail.x;
        const from = rowOf(rail.pins[0]);
        return (
          <g key={rail.x}>
            <Wire d={`M${px(x)} ${py(from)}V${py(rail.end || rail.supply)}`} />
            {rail.pins.map((n, i) => (
              <g key={n}>
                <Wire d={`M${px(x)} ${py(rowOf(n))}H${px(base + (isLeft(n) ? 2 : 30))}`} />
                {i > 0 && <Joint cx={px(x)} cy={py(rowOf(n))} r="3" />}
              </g>
            ))}
            {rail.end ? <Ground x={x} y={rail.end} /> : <Supply x={x} y={rail.supply} />}
          </g>
        );
      })}
    </g>
  );
};

const STATUS = ["", "Z 2.07", "X 3700 Y 3650", "dx 3700 dy 3650 dist 5197", "grid 50", "mils", "Select item(s)"];
const MENUS = ["File", "Edit", "View", "Place", "Inspect", "Tools", "Preferences", "Help"];

const WindowGlyph = styled.svg`
  width: 10px;
  height: 10px;
  fill: none;
  stroke: #3d3d3d;
  stroke-width: 1.2;
`;

export default function App() {
  return (
    <Window>
      <GlobalStyle />
      <TitleBar>
        <Title>SO-DIMM [carrier/Carrier SO-DIMM] — Schematic Editor</Title>
        <WindowButtons>
          <RoundButton type="button" aria-label="Minimize">
            <WindowGlyph viewBox="0 0 10 10"><path d="M1.5 8h7" /></WindowGlyph>
          </RoundButton>
          <RoundButton type="button" aria-label="Restore">
            <WindowGlyph viewBox="0 0 10 10"><path d="M1.5 3.5h5v5h-5z" /><path d="M3.5 1h5.5v5.5" stroke="#848484" /></WindowGlyph>
          </RoundButton>
          <RoundButton type="button" aria-label="Close">
            <WindowGlyph viewBox="0 0 10 10"><path d="M1.5 1.5l7 7M8.5 1.5l-7 7" strokeWidth="1.5" /></WindowGlyph>
          </RoundButton>
        </WindowButtons>
      </TitleBar>
      <MenuBar>
        {MENUS.map((m) => <MenuItem key={m} type="button">{m}</MenuItem>)}
      </MenuBar>
      <TopTools role="toolbar">
        <Tools items={TOP} />
      </TopTools>
      <Workspace>
        <SideTools role="toolbar">
          <Tools items={LEFT} flat active={["gridOverride", "mils", "rightAngle", "annotate"]} />
        </SideTools>
        <Canvas>
          <Sheet>
            <path d="M88.5 0v3" stroke="#848484" />
            {UNITS.map((u) => <Connector key={u.ref} unit={u} />)}
            <SheetText $kind="note" $anchor="start" x={1304} y={163}>Implement on BMC!</SheetText>
            <SheetText $kind="note" $anchor="start" $size={15} x={1760} y={875}>{"<- Mechanical Pin"}</SheetText>
          </Sheet>
        </Canvas>
        <SideTools role="toolbar" $right>
          <Tools items={RIGHT} flat active={["select"]} />
        </SideTools>
      </Workspace>
      <Messages />
      <StatusBar>
        {STATUS.map((s, i) => <StatusField key={i}>{s}</StatusField>)}
      </StatusBar>
    </Window>
  );
}
